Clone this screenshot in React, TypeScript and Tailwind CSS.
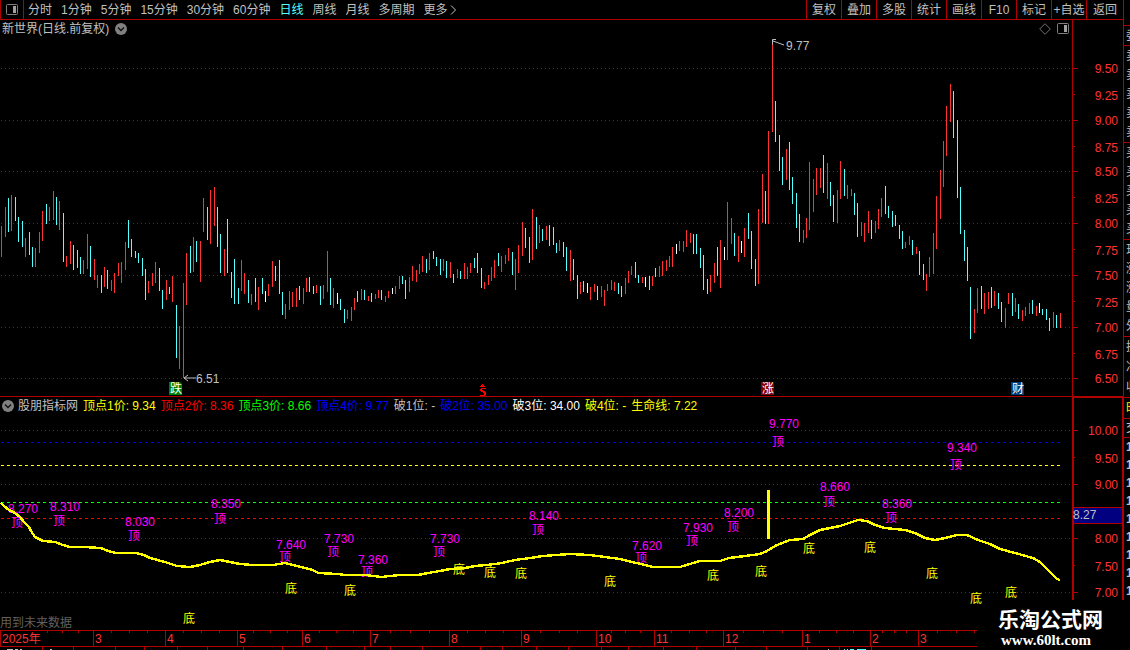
import React from 'react';
import clsx from 'clsx';

type Bar = [x: number, high: number, low: number, kind: 'r' | 'c' | 'w'];

const barColors = { r: '#ff3232', c: '#54ffff', w: '#ffffff' };

const bars: Bar[] = [
  [1, 226, 257, 'r'], [5, 207, 237, 'r'], [8, 198, 232, 'c'], [11, 195, 231, 'r'], [15, 197, 221, 'c'],
  [18, 217, 242, 'c'], [22, 221, 247, 'c'], [25, 238, 257, 'r'], [29, 232, 255, 'c'], [32, 247, 267, 'c'],
  [35, 248, 267, 'r'], [39, 232, 253, 'r'], [42, 211, 241, 'r'], [46, 204, 224, 'c'], [49, 207, 221, 'r'],
  [53, 191, 220, 'r'], [56, 197, 225, 'c'], [59, 201, 230, 'r'], [63, 213, 262, 'c'], [66, 256, 267, 'r'],
  [70, 241, 264, 'r'], [73, 245, 270, 'c'], [77, 250, 268, 'c'], [80, 257, 274, 'c'], [83, 260, 274, 'r'],
  [87, 234, 269, 'r'], [90, 246, 277, 'c'], [94, 259, 280, 'r'], [97, 275, 288, 'r'], [101, 275, 293, 'c'],
  [104, 267, 287, 'r'], [107, 270, 289, 'c'], [111, 280, 291, 'r'], [114, 273, 293, 'r'], [118, 263, 276, 'r'],
  [121, 262, 283, 'r'], [125, 242, 270, 'r'], [128, 220, 248, 'c'], [131, 239, 257, 'c'], [135, 251, 258, 'c'],
  [138, 253, 263, 'c'], [142, 258, 276, 'c'], [145, 269, 300, 'c'], [148, 281, 293, 'r'], [152, 273, 286, 'r'],
  [155, 262, 283, 'r'], [159, 268, 291, 'c'], [162, 290, 309, 'c'], [166, 280, 300, 'r'], [169, 287, 294, 'c'],
  [172, 276, 302, 'r'], [176, 305, 358, 'c'], [179, 326, 369, 'r'], [183, 283, 378, 'r'], [186, 253, 305, 'r'],
  [190, 246, 273, 'c'], [193, 237, 272, 'r'], [196, 241, 262, 'c'], [200, 241, 282, 'r'], [203, 198, 232, 'r'],
  [207, 207, 240, 'c'], [210, 190, 244, 'r'], [214, 187, 226, 'r'], [217, 207, 247, 'c'], [220, 234, 273, 'c'],
  [224, 249, 276, 'r'], [227, 219, 273, 'c'], [231, 272, 298, 'c'], [234, 259, 304, 'c'], [238, 288, 304, 'c'],
  [241, 260, 291, 'r'], [244, 273, 294, 'r'], [248, 280, 303, 'c'], [251, 294, 305, 'r'], [255, 278, 302, 'c'],
  [258, 287, 310, 'r'], [262, 278, 294, 'c'], [265, 291, 302, 'w'], [268, 284, 296, 'r'], [272, 261, 287, 'r'],
  [275, 266, 281, 'c'], [279, 260, 294, 'c'], [282, 292, 315, 'c'], [285, 304, 319, 'r'], [289, 291, 310, 'r'],
  [292, 292, 307, 'r'], [296, 288, 307, 'r'], [299, 286, 300, 'c'], [303, 288, 304, 'r'], [306, 278, 292, 'r'],
  [309, 277, 292, 'c'], [313, 286, 294, 'c'], [316, 285, 293, 'r'], [320, 286, 305, 'c'], [323, 285, 299, 'r'],
  [327, 251, 292, 'r'], [330, 278, 305, 'c'], [333, 288, 308, 'r'], [337, 293, 304, 'w'], [340, 299, 310, 'c'],
  [344, 309, 323, 'c'], [347, 310, 319, 'r'], [351, 307, 321, 'r'], [354, 298, 310, 'r'], [357, 291, 302, 'c'],
  [361, 289, 300, 'r'], [364, 290, 300, 'c'], [368, 296, 301, 'r'], [371, 293, 302, 'c'], [375, 294, 299, 'r'],
  [378, 290, 298, 'r'], [381, 290, 300, 'c'], [385, 296, 302, 'r'], [388, 291, 298, 'r'], [392, 288, 294, 'w'],
  [395, 286, 294, 'r'], [399, 276, 289, 'r'], [402, 276, 284, 'c'], [405, 280, 299, 'c'], [409, 277, 292, 'r'],
  [412, 266, 281, 'r'], [416, 270, 282, 'r'], [419, 264, 274, 'r'], [422, 256, 272, 'r'], [426, 259, 273, 'c'],
  [429, 253, 270, 'r'], [433, 251, 259, 'c'], [436, 257, 266, 'c'], [440, 259, 275, 'c'], [443, 259, 271, 'r'],
  [446, 261, 278, 'c'], [450, 262, 278, 'r'], [453, 274, 283, 'c'], [457, 269, 278, 'r'], [460, 271, 279, 'c'],
  [464, 263, 279, 'r'], [467, 267, 279, 'r'], [470, 263, 273, 'r'], [474, 258, 268, 'c'], [477, 253, 273, 'c'],
  [481, 268, 288, 'c'], [484, 282, 289, 'r'], [488, 275, 285, 'r'], [491, 267, 281, 'r'], [494, 260, 278, 'r'],
  [498, 253, 266, 'c'], [501, 256, 272, 'r'], [505, 255, 264, 'r'], [508, 248, 261, 'r'], [512, 252, 275, 'c'],
  [515, 259, 290, 'r'], [518, 245, 273, 'r'], [522, 222, 256, 'r'], [525, 228, 248, 'c'], [529, 237, 263, 'c'],
  [532, 209, 260, 'r'], [536, 217, 249, 'c'], [539, 225, 243, 'r'], [542, 229, 241, 'c'], [546, 226, 240, 'r'],
  [549, 225, 246, 'c'], [553, 227, 245, 'c'], [556, 243, 253, 'c'], [559, 240, 251, 'r'], [563, 242, 257, 'c'],
  [566, 247, 271, 'c'], [570, 250, 281, 'r'], [573, 259, 280, 'c'], [577, 275, 299, 'c'], [580, 282, 294, 'r'],
  [583, 281, 292, 'c'], [587, 283, 293, 'w'], [590, 287, 300, 'r'], [594, 284, 292, 'r'], [597, 286, 300, 'c'],
  [601, 286, 297, 'r'], [604, 290, 306, 'r'], [607, 284, 291, 'r'], [611, 280, 290, 'r'], [614, 282, 291, 'r'],
  [618, 283, 294, 'c'], [621, 286, 297, 'c'], [625, 278, 294, 'r'], [628, 271, 283, 'r'], [631, 266, 275, 'r'],
  [635, 262, 278, 'c'], [638, 275, 283, 'c'], [642, 277, 283, 'r'], [645, 277, 287, 'w'], [649, 276, 290, 'c'],
  [652, 276, 286, 'r'], [655, 268, 277, 'c'], [659, 266, 277, 'r'], [662, 261, 276, 'r'], [666, 260, 271, 'r'],
  [669, 256, 267, 'r'], [672, 247, 267, 'r'], [676, 244, 254, 'w'], [679, 241, 251, 'r'], [683, 241, 252, 'r'],
  [686, 230, 247, 'r'], [690, 233, 243, 'r'], [693, 234, 254, 'c'], [696, 234, 254, 'c'], [700, 248, 268, 'c'],
  [703, 255, 290, 'c'], [707, 279, 294, 'c'], [710, 275, 292, 'r'], [714, 263, 283, 'r'], [717, 247, 276, 'c'],
  [720, 240, 288, 'r'], [724, 247, 260, 'w'], [727, 202, 260, 'r'], [731, 218, 244, 'r'], [734, 233, 256, 'c'],
  [738, 236, 262, 'r'], [741, 241, 253, 'w'], [744, 228, 257, 'r'], [748, 213, 239, 'c'], [751, 231, 269, 'c'],
  [755, 259, 286, 'c'], [758, 209, 284, 'r'], [762, 174, 223, 'r'], [765, 191, 224, 'c'], [768, 131, 224, 'r'],
  [772, 42, 132, 'r'], [775, 101, 142, 'c'], [779, 135, 171, 'c'], [782, 157, 185, 'c'], [786, 149, 180, 'r'],
  [789, 142, 190, 'c'], [792, 177, 204, 'c'], [796, 193, 228, 'c'], [799, 214, 242, 'c'], [803, 230, 243, 'r'],
  [806, 218, 238, 'r'], [809, 162, 230, 'r'], [813, 179, 212, 'r'], [816, 168, 195, 'r'], [820, 168, 188, 'r'],
  [823, 155, 193, 'c'], [827, 163, 199, 'r'], [830, 182, 206, 'c'], [833, 195, 222, 'c'], [837, 190, 223, 'r'],
  [840, 161, 199, 'r'], [844, 169, 196, 'c'], [847, 185, 199, 'r'], [851, 189, 196, 'r'], [854, 193, 215, 'c'],
  [857, 203, 237, 'c'], [861, 222, 236, 'r'], [864, 223, 242, 'r'], [868, 211, 233, 'r'], [871, 220, 239, 'c'],
  [875, 221, 233, 'r'], [878, 209, 229, 'r'], [881, 198, 217, 'r'], [885, 186, 214, 'c'], [888, 206, 218, 'c'],
  [892, 211, 227, 'c'], [895, 215, 226, 'c'], [899, 225, 239, 'c'], [902, 231, 249, 'c'], [905, 242, 248, 'r'],
  [909, 236, 245, 'r'], [912, 240, 255, 'c'], [916, 247, 254, 'r'], [919, 251, 275, 'c'], [923, 264, 280, 'c'],
  [926, 274, 291, 'r'], [929, 257, 277, 'r'], [933, 233, 274, 'r'], [936, 196, 249, 'r'], [940, 170, 219, 'r'],
  [943, 141, 187, 'r'], [946, 106, 156, 'r'], [950, 84, 122, 'r'], [953, 91, 138, 'c'], [957, 120, 198, 'c'],
  [960, 187, 234, 'c'], [964, 230, 261, 'c'], [967, 247, 281, 'c'], [970, 287, 339, 'c'], [974, 309, 333, 'r'],
  [977, 288, 313, 'r'], [981, 286, 309, 'c'], [984, 293, 314, 'r'], [988, 292, 309, 'r'], [991, 287, 308, 'c'],
  [994, 291, 306, 'r'], [998, 293, 309, 'c'], [1001, 302, 322, 'c'], [1005, 308, 328, 'r'], [1008, 293, 304, 'r'],
  [1012, 293, 316, 'c'], [1015, 298, 312, 'r'], [1018, 304, 319, 'c'], [1022, 310, 321, 'r'], [1025, 307, 316, 'r'],
  [1029, 303, 314, 'r'], [1032, 300, 314, 'c'], [1036, 306, 316, 'r'], [1039, 303, 313, 'w'], [1042, 309, 315, 'c'],
  [1046, 309, 320, 'c'], [1049, 318, 331, 'c'], [1053, 312, 328, 'r'], [1056, 315, 328, 'c'], [1060, 313, 328, 'r'],
];

const lifeLine =
  '1,503 4,506 9,510 15,513 20,517 24,522 29,527 31,531 35,537 43,541 55,542 63,545 70,547 84,547 101,548 108,551 116,553 136,553 144,555 150,558 165,562 177,566 190,567 200,565 210,562 220,560 230,562 240,564 252,565 273,565 285,563 297,566 313,570 318,573 338,574 345,575 366,575 381,577 390,576 400,575 418,575 428,573 440,571 450,569 465,568 475,566 487,565 502,563 515,560 530,558 543,556 556,555 570,554 590,555 605,557 620,559 632,562 645,565 653,567 680,567 690,564 700,561 720,561 729,558 745,556 760,554 767,551 775,546 790,540 803,539 810,535 820,530 840,526 858,520 867,521 875,525 885,528 905,530 915,533 925,538 935,540 945,538 957,535 967,535 978,540 990,544 1000,549 1015,553 1033,558 1040,562 1045,567 1053,575 1057,579 1060,580';

// value, x, baseline of the value, baseline of the mark under it
const tops: [string, number, number, number][] = [
  ['8.270', 8, 513, 527],
  ['8.310', 50, 511, 525],
  ['8.030', 125, 526, 540],
  ['8.350', 211, 508, 523],
  ['7.640', 276, 549, 561],
  ['7.730', 324, 543, 556],
  ['7.360', 358, 564, 576],
  ['7.730', 430, 543, 556],
  ['8.140', 529, 520, 534],
  ['7.620', 632, 550, 562],
  ['7.930', 683, 532, 545],
  ['8.200', 724, 517, 531],
  ['9.770', 769, 428, 446],
  ['9.340', 947, 452, 469],
  ['8.660', 820, 491, 506],
  ['8.360', 882, 508, 522],
];

const bottoms = [
  [183, 623], [285, 593], [344, 595], [453, 574], [484, 577], [515, 578], [604, 586],
  [707, 580], [755, 576], [803, 553], [864, 552], [926, 578], [970, 603], [1005, 597],
];

// label, tick y, label baseline
const priceTicks: [string, number, number][] = [
  ['9.50', 68, 73], ['9.25', 94, 100], ['9.00', 120, 125], ['8.75', 146, 152], ['8.50', 171, 176],
  ['8.25', 197, 203], ['8.00', 223, 228], ['7.75', 249, 255], ['7.50', 275, 280], ['7.25', 301, 307],
  ['7.00', 327, 332], ['6.75', 353, 359], ['6.50', 378, 383],
];

const indicatorTicks: [string, number, number][] = [
  ['10.00', 430, 435], ['9.50', 457, 463], ['9.00', 484, 489], ['8.00', 538, 543], ['7.50', 565, 571], ['7.00', 592, 597],
];

const months: [string, number][] = [
  ['2025年', 0], ['3', 93], ['4', 165], ['5', 237], ['6', 302], ['7', 370], ['8', 449], ['9', 521],
  ['10', 596], ['11', 654], ['12', 723], ['1', 802], ['2', 870], ['3', 918],
];

const weekTicks = [
  47, 62, 78, 111, 129, 147, 183, 201, 219, 253, 270, 287, 319, 336, 353, 390, 410, 429, 467, 485, 503, 540, 559, 577,
  611, 625, 640, 671, 689, 706, 743, 763, 782, 819, 836, 853, 882, 894, 906, 937, 956, 974,
];

const footerTicks = [42, 73, 115, 144, 177, 207, 243, 282, 326, 364, 390, 422, 480, 502, 536, 568, 601, 628, 663, 696, 735, 766, 807, 839, 871];

const periods = ['分时', '1分钟', '5分钟', '15分钟', '30分钟', '60分钟', '日线', '周线', '月线', '多周期', '更多'];
const tools = ['复权', '叠加', '多股', '统计', '画线', 'F10', '标记', '+自选'];

const legend = [
  { text: '顶点1价: 9.34', color: 'text-[#ffff00]' },
  { text: '顶点2价: 8.36', color: 'text-[#ff0000]' },
  { text: '顶点3价: 8.66', color: 'text-[#00ff00]' },
  { text: '顶点4价: 9.77', color: 'text-[#0000ff]' },
  { text: '破1位: -', color: 'text-[#c0c0c0]' },
  { text: '破2位: 35.00', color: 'text-[#0000ff]' },
  { text: '破3位: 34.00', color: 'text-white' },
  { text: '破4位: -', color: 'text-[#ffff00]' },
  { text: '生命线: 7.22', color: 'text-[#ffff00]' },
];

const PanelIcon: React.FC = () => (
  <svg className="w-3 h-3" viewBox="0 0 12 12">
    <rect x="0.5" y="0.5" width="11" height="10" rx="1" fill="none" stroke="#808080" />
    <rect x="7" y="2" width="3" height="7" fill="#a0a0a0" />
  </svg>
);

const RoundArrow: React.FC = () => (
  <svg className="w-3 h-3" viewBox="0 0 12 12">
    <circle cx="6" cy="6" r="6" fill="#808080" />
    <path d="M3 4.5 6 7.5 9 4.5" fill="none" stroke="#101010" strokeWidth="1.4" />
  </svg>
);

const GridLine: React.FC<{ y: number }> = ({ y }) => (
  <line x1="1" x2="1072" y1={y + 0.5} y2={y + 0.5} stroke="#a80808" strokeDasharray="1 3" />
);

const Axis: React.FC<{ ticks: [string, number, number][]; major: (i: number) => boolean }> = ({ ticks, major }) => (
  <>
    {ticks.map(([label, y, base], i) => (
      <g key={label}>
        <rect x="1072" y={y} width={major(i) ? 6 : 3} height="1" fill="#b00000" />
        <text x="1118" y={base} textAnchor="end" fill="#ff3232">{label}</text>
      </g>
    ))}
  </>
);

const Badge: React.FC<{ x: number; fill: string; text: string }> = ({ x, fill, text }) => (
  <g>
    <path d={`M${x} 382h11l2 2v11h-13z`} fill={fill} />
    <text x={x + 1} y="393" fill="#fff">{text}</text>
  </g>
);

const Toolbar: React.FC = () => (
  <header className="flex justify-between h-5 border-b border-[#b00000] whitespace-nowrap">
    <nav className="flex items-center">
      <button className="flex items-center justify-center w-6 h-full mr-1 border-x border-[#b00000]" aria-label="侧栏">
        <PanelIcon />
      </button>
      <div className="flex items-center gap-[9px]">
        {periods.map((name) => (
          <button key={name} className={clsx(name === '日线' && 'text-[#54ffff]')}>
            {name}
          </button>
        ))}
      </div>
      <svg className="w-2 h-3 ml-[2px]" viewBox="0 0 8 12">
        <path d="M1 1.5 5.5 6 1 10.5" fill="none" stroke="#c0c0c0" />
      </svg>
    </nav>
    <div className="flex">
      {tools.map((name) => (
        <button key={name} className="w-[35px] border-l border-[#b00000]">
          {name}
        </button>
      ))}
      <button className="w-[37px] border-l border-[#b00000]">返回</button>
    </div>
  </header>
);

const PriceChart: React.FC = () => (
  <section className="flex border-b border-[#b00000]">
    <div className="flex-1 min-w-0">
      <div className="flex items-center justify-between h-[18px] pl-[2px] pr-[3px]">
        <h1 className="flex items-center gap-[6px]">
          新世界(日线.前复权)
          <button aria-label="展开">
            <RoundArrow />
          </button>
        </h1>
        <div className="flex items-center gap-[6px]">
          <svg className="w-3 h-3" viewBox="0 0 12 12">
            <path d="M6 .7 11.3 6 6 11.3.7 6z" fill="none" stroke="#707070" />
          </svg>
          <button aria-label="面板">
            <PanelIcon />
          </button>
        </div>
      </div>
      <svg className="block w-full h-[358px]" viewBox="0 38 1072 358" preserveAspectRatio="xMinYMin meet">
        <g shapeRendering="crispEdges">
          {priceTicks.filter((_, i) => i % 2 === 0).map(([label, y]) => (
            <GridLine key={label} y={y} />
          ))}
          {bars.map(([x, high, low, kind]) => (
            <rect key={x} x={x} y={high} width="1" height={low - high} fill={barColors[kind]} />
          ))}
        </g>
        <path d="M776 39.5h-3.5v5M773 41l11 4M184 378h12M188 375l-4 3 4 3" fill="none" stroke="#c0c0c0" />
        <g className="text-[12px]" fill="#c0c0c0">
          <text x="786" y="50">9.77</text>
          <text x="196" y="383">6.51</text>
          <Badge x={169} fill="#008000" text="跌" />
          <Badge x={761} fill="#800000" text="涨" />
          <Badge x={1011} fill="#003c78" text="财" />
        </g>
        <path
          d="M482 384h1v1h1v1h1v1h-5v-1h1v-1h1zM481 388h5v1h-4v1h1v1h2v1h1v3h-1v1h-5v-1h4v-2h-1v-1h-2v-1h-1v-2h1z"
          fill="#ff0000"
          shapeRendering="crispEdges"
        />
      </svg>
    </div>
    <svg className="w-[51px] h-[376px] text-[12px]" viewBox="1072 20 51 376">
      <rect x="1072" y="20" width="1" height="376" fill="#b00000" />
      <Axis ticks={priceTicks} major={(i) => i % 2 === 0} />
    </svg>
  </section>
);

const IndicatorChart: React.FC = () => (
  <section className="flex items-start">
    <div className="flex-1 min-w-0">
      <div className="flex items-center h-[17px] gap-[5px] pl-[2px] whitespace-nowrap">
        <button className="flex items-center gap-1">
          <RoundArrow />
          股朋指标网
        </button>
        {legend.map((item) => (
          <span key={item.text} className={item.color}>
            {item.text}
          </span>
        ))}
      </div>
      <svg className="block w-full h-[216px] text-[12px]" viewBox="0 414 1072 216" preserveAspectRatio="xMinYMin meet">
        <g shapeRendering="crispEdges">
          {[430, 484, 538, 592].map((y) => (
            <GridLine key={y} y={y} />
          ))}
          <g strokeDasharray="3 3">
            <line x1="1" x2="1060" y1="442.5" y2="442.5" stroke="#0000ff" />
            <line x1="1" x2="1060" y1="465.5" y2="465.5" stroke="#ffff00" />
            <line x1="1" x2="1060" y1="502.5" y2="502.5" stroke="#00ff00" />
            <line x1="1" x2="1060" y1="518.5" y2="518.5" stroke="#ff0000" />
          </g>
        </g>
        <g fill="#ff00ff">
          {tops.map(([value, x, y, markY]) => (
            <React.Fragment key={x}>
              <text x={x} y={y}>{value}</text>
              <text x={x + 3} y={markY}>顶</text>
            </React.Fragment>
          ))}
        </g>
        <g fill="#ffff00">
          {bottoms.map(([x, y]) => (
            <text key={x} x={x} y={y}>底</text>
          ))}
        </g>
        <g shapeRendering="crispEdges">
          <polyline points={lifeLine} fill="none" stroke="#ffff00" strokeWidth="2.4" strokeLinejoin="round" />
          <rect x="767" y="490" width="3" height="49" fill="#ffff00" />
        </g>
        <text x="0" y="627" fill="#606060">用到未来数据</text>
      </svg>
    </div>
    <svg className="w-[51px] h-[203px] text-[12px]" viewBox="1072 397 51 203">
      <path d="M1072 397h51v203h-1v-202h-48v202h-2z" fill="#b00000" />
      <Axis ticks={indicatorTicks} major={(i) => i !== 1 && i !== 4} />
      <rect x="1074" y="507" width="48" height="17" fill="#b00000" />
      <rect x="1074" y="508" width="48" height="15" fill="#000080" />
      <text x="1073" y="519" fill="#c0c0c0">8.27</text>
    </svg>
  </section>
);

const Timeline: React.FC = () => (
  <svg className="block w-full h-5 text-[12px]" viewBox="0 630 1123 20" preserveAspectRatio="xMinYMin meet">
    <g fill="#b00000" shapeRendering="crispEdges">
      <rect x="0" y="630" width="1123" height="1" />
      <rect x="0" y="646" width="1123" height="1" />
      {weekTicks.map((x) => (
        <rect key={x} x={x} y="631" width="1" height="2" />
      ))}
      {months.map(([, x]) => (
        <rect key={x} x={x} y="631" width="1" height="15" />
      ))}
      {footerTicks.map((x) => (
        <rect key={x} x={x} y="647" width="1" height="3" />
      ))}
    </g>
    <g fill="#ff3232">
      {months.map(([name, x]) => (
        <text key={x} x={x + 2} y="643">{name}</text>
      ))}
    </g>
    <path d="M7 649.5h6M15 649.5h3M20 649.5h2M50 649.5h2M828 649.5h1" stroke="#c0c0c0" />
    <path d="M844 649.5h1M847 649.5h1M850 649.5h4M857 649.5h9" stroke="#54ffff" />
  </svg>
);

const QuoteStrip: React.FC = () => {
  const sections = [
    { chars: '委', size: 'h-5' },
    { chars: '卖卖卖卖卖', size: 'h-[97px]' },
    { chars: '买买买买买', size: 'h-[97px]' },
    { chars: '现涨涨量外', size: 'h-[97px]' },
    { chars: '换净收', size: 'h-[61px]' },
    { chars: '时', size: 'h-[21px] text-[#ffff00]' },
    { chars: '交', size: 'h-[19px]' },
  ];

  return (
    <aside className="flex flex-col w-[7px] h-[600px] pt-[25px] border-l border-[#b00000] overflow-hidden">
      {sections.map(({ chars, size }) => (
        <div key={chars} className={clsx('flex flex-col justify-around border-t border-[#b00000] pl-[2px]', size)}>
          {[...chars].map((char, i) => (
            <span key={i} className="w-3 leading-3">
              {char}
            </span>
          ))}
        </div>
      ))}
      <div className="border-t border-[#b00000] pl-[2px]">
        {Array.from({ length: 9 }, (_, i) => (
          <p key={i} className="font-bold leading-[18px]">1</p>
        ))}
      </div>
    </aside>
  );
};

const App: React.FC = () => {
  return (
    <div className="relative flex items-start bg-black text-[#c0c0c0] text-[12px] leading-4 font-['Liberation_Sans','Noto_Sans_CJK_SC',sans-serif] overflow-hidden">
      <div className="flex-1 min-w-0">
        <Toolbar />
        <PriceChart />
        <IndicatorChart />
        <Timeline />
      </div>
      <QuoteStrip />
      <div className="absolute right-0 bottom-0 w-[153px] h-[45px] pt-1 pl-[21px] bg-black text-white font-bold whitespace-nowrap">
        <p className="text-[21px] leading-[22px]">乐淘公式网</p>
        <p className="pl-[3px] text-[15px] leading-[18px] font-['Liberation_Serif',serif]">www.60lt.com</p>
      </div>
    </div>
  );
};

export default App;
